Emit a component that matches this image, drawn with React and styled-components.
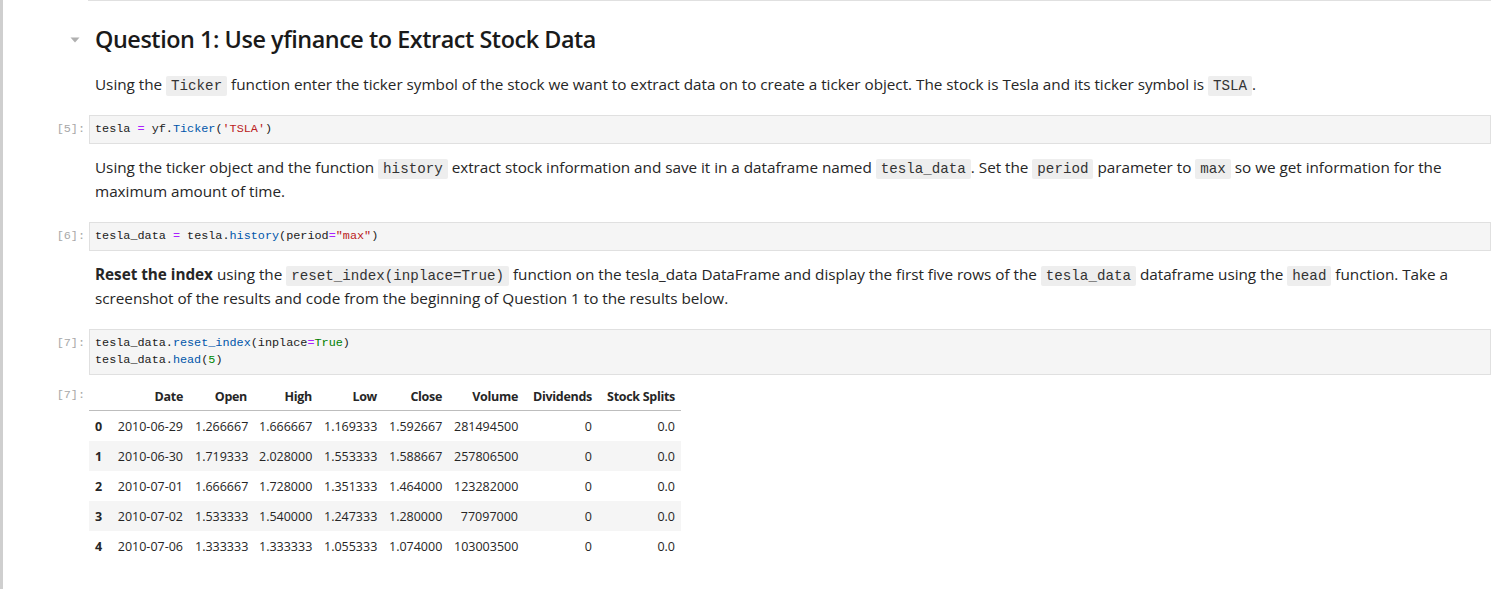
import React from "react";
import styled, { createGlobalStyle } from "styled-components";

const Global = createGlobalStyle`
  html, body { margin: 0; padding: 0; background: #fff; }
  body { font-family: "Open Sans", "Noto Sans", sans-serif; color: #212121; }
`;

const SANS = `"Open Sans", "Noto Sans", sans-serif`;
const MONO = `"Liberation Mono", "DejaVu Sans Mono", monospace`;

const Page = styled.div`
  min-height: 589px;
  border-left: 3px solid #cfcfcf;
  box-sizing: border-box;
  padding-right: 8px;
  display: flex;
  flex-direction: column;
`;

const TopRule = styled.div`
  margin-left: 85px;
  height: 1px;
  background: #e0e0e0;
`;

const Cell = styled.div`
  display: grid;
  grid-template-columns: 86px 1fr;
  margin-top: ${(p) => p.$mt || 0}px;
`;

const Prompt = styled.div`
  font-family: ${MONO};
  font-size: 11.8px;
  line-height: 17px;
  color: #a8a8a8;
  text-align: right;
  padding-right: 4px;
  padding-top: ${(p) => p.$pt || 6}px;
  white-space: nowrap;
`;

const Gutter = styled.div`
  position: relative;
`;

const Caret = styled.svg`
  position: absolute;
  left: 67px;
  top: 12px;
`;

const Heading = styled.h2`
  margin: 0;
  padding-left: 6px;
  font-family: ${SANS};
  font-size: 23.4px;
  font-weight: 560;
  line-height: 29px;
  color: #1a1a1a;
  letter-spacing: -0.45px;
`;

const Markdown = styled.p`
  margin: 0;
  padding-left: 6px;
  padding-right: 30px;
  font-family: ${SANS};
  font-size: 15.3px;
  line-height: 24px;
  color: #262626;
  letter-spacing: -0.03px;
`;

const InlineCode = styled.code`
  font-family: ${MONO};
  font-size: 14.2px;
  line-height: 1;
  background: #eeeeee;
  padding: 2px 5px;
  border-radius: 2px;
  color: #333;
  letter-spacing: 0;
`;

const CodeBox = styled.pre`
  margin: 0;
  background: #f5f5f5;
  border: 1px solid #e0e0e0;
  padding: 5px;
  font-family: ${MONO};
  font-size: 11.8px;
  line-height: 17px;
  color: #212121;
  white-space: pre;
`;

const Tok = styled.span`
  color: ${(p) =>
    ({ op: "#aa22ff", prop: "#0055aa", str: "#ba2121", kw: "#008000", num: "#008800" }[p.$k] || "inherit")};
`;

const Table = styled.table`
  border-collapse: collapse;
  table-layout: fixed;
  width: 592px;
  font-family: ${SANS};
  font-size: 12.5px;
  color: #262626;
`;

const Th = styled.th`
  text-align: right;
  font-weight: 700;
  padding: 0 6px;
  height: 28px;
  white-space: nowrap;
  border-bottom: 1px solid #bdbdbd;
  vertical-align: middle;
  letter-spacing: -0.3px;
`;

const Tr = styled.tr`
  background: ${(p) => (p.$odd ? "#f5f5f5" : "transparent")};
`;

const Td = styled.td`
  text-align: ${(p) => (p.$left ? "left" : "right")};
  font-weight: ${(p) => (p.$bold ? 700 : 400)};
  padding: 0 6px;
  height: 30px;
  white-space: nowrap;
  vertical-align: middle;
`;

const widths = [22, 78, 64, 65, 65, 65, 76, 74, 83];
const headers = ["", "Date", "Open", "High", "Low", "Close", "Volume", "Dividends", "Stock Splits"];
const rows = [
  ["0", "2010-06-29", "1.266667", "1.666667", "1.169333", "1.592667", "281494500", "0", "0.0"],
  ["1", "2010-06-30", "1.719333", "2.028000", "1.553333", "1.588667", "257806500", "0", "0.0"],
  ["2", "2010-07-01", "1.666667", "1.728000", "1.351333", "1.464000", "123282000", "0", "0.0"],
  ["3", "2010-07-02", "1.533333", "1.540000", "1.247333", "1.280000", "77097000", "0", "0.0"],
  ["4", "2010-07-06", "1.333333", "1.333333", "1.055333", "1.074000", "103003500", "0", "0.0"],
];

export default function App() {
  return (
    <>
      <Global />
      <Page>
        <TopRule />
        <Cell $mt={24}>
          <Gutter>
            <Caret width="10" height="6" viewBox="0 0 10 6">
              <path d="M0.5 0.5 L9.5 0.5 L5 5.5 Z" fill="#b0b0b0" />
            </Caret>
          </Gutter>
          <Heading>Question 1: Use yfinance to Extract Stock Data</Heading>
        </Cell>
        <Cell $mt={18}>
          <div />
          <Markdown>
            Using the <InlineCode>Ticker</InlineCode> function enter the ticker symbol of the stock we want to
            extract data on to create a ticker object. The stock is Tesla and its ticker symbol is{" "}
            <InlineCode>TSLA</InlineCode>.
          </Markdown>
        </Cell>
        <Cell $mt={19}>
          <Prompt>[5]:</Prompt>
          <CodeBox>
            tesla <Tok $k="op">=</Tok> yf.<Tok $k="prop">Ticker</Tok>(<Tok $k="str">'TSLA'</Tok>)
          </CodeBox>
        </Cell>
        <Cell $mt={11}>
          <div />
          <Markdown>
            Using the ticker object and the function <InlineCode>history</InlineCode> extract stock information
            and save it in a dataframe named <InlineCode>tesla_data</InlineCode>. Set the{" "}
            <InlineCode>period</InlineCode> parameter to <InlineCode>max</InlineCode> so we get information for the
            maximum amount of time.
          </Markdown>
        </Cell>
        <Cell $mt={19}>
          <Prompt>[6]:</Prompt>
          <CodeBox>
            tesla_data <Tok $k="op">=</Tok> tesla.<Tok $k="prop">history</Tok>(period<Tok $k="op">=</Tok>
            <Tok $k="str">"max"</Tok>)
          </CodeBox>
        </Cell>
        <Cell $mt={11}>
          <div />
          <Markdown>
            <b>Reset the index</b> using the <InlineCode>reset_index(inplace=True)</InlineCode> function on the
            tesla_data DataFrame and display the first five rows of the <InlineCode>tesla_data</InlineCode>{" "}
            dataframe using the <InlineCode>head</InlineCode> function. Take a screenshot of the results and code
            from the beginning of Question 1 to the results below.
          </Markdown>
        </Cell>
        <Cell $mt={19}>
          <Prompt>[7]:</Prompt>
          <CodeBox>
            tesla_data.<Tok $k="prop">reset_index</Tok>(inplace<Tok $k="op">=</Tok>
            <Tok $k="kw">True</Tok>){"\n"}tesla_data.<Tok $k="prop">head</Tok>(<Tok $k="num">5</Tok>)
          </CodeBox>
        </Cell>
        <Cell $mt={7}>
          <Prompt $pt={5}>[7]:</Prompt>
          <div>
            <Table>
              <colgroup>
                {widths.map((w, i) => (
                  <col key={i} style={{ width: w }} />
                ))}
              </colgroup>
              <thead>
                <tr>
                  {headers.map((h, i) => (
                    <Th key={i}>{h}</Th>
                  ))}
                </tr>
              </thead>
              <tbody>
                {rows.map((r, ri) => (
                  <Tr key={ri} $odd={ri % 2 === 1}>
                    {r.map((c, ci) => (
                      <Td key={ci} $bold={ci === 0} $left={ci === 0}>
                        {c}
                      </Td>
                    ))}
                  </Tr>
                ))}
              </tbody>
            </Table>
          </div>
        </Cell>
      </Page>
    </>
  );
}
